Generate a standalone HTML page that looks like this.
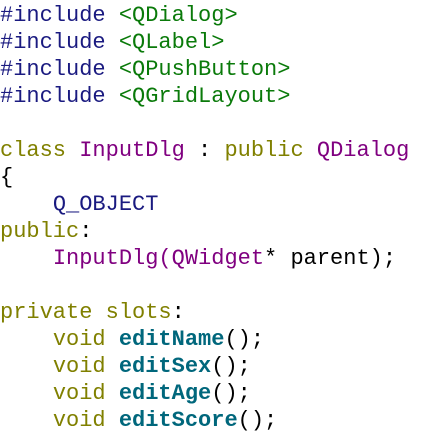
<!DOCTYPE html>
<html><head><meta charset="utf-8"><style>
html,body{margin:0;padding:0;background:#fff;width:422px;height:433px;overflow:hidden}
pre{margin:0;padding:0;position:absolute;top:2px;left:0;font-family:"Liberation Mono",monospace;font-size:22px;line-height:27px;color:#000}
.n{color:#1a1a80}.g{color:#0a7a0a}.k{color:#808000}.p{color:#800080}.b{color:#00677c;font-weight:bold}
</style></head><body>
<pre><span class="n">#include</span> <span class="g">&lt;QDialog&gt;</span>
<span class="n">#include</span> <span class="g">&lt;QLabel&gt;</span>
<span class="n">#include</span> <span class="g">&lt;QPushButton&gt;</span>
<span class="n">#include</span> <span class="g">&lt;QGridLayout&gt;</span>

<span class="k">class</span> <span class="p">InputDlg</span> : <span class="k">public</span> <span class="p">QDialog</span>
{
    <span class="n">Q_OBJECT</span>
<span class="k">public</span>:
    <span class="p">InputDlg(QWidget</span>* parent);

<span class="k">private slots</span>:
    <span class="k">void</span> <span class="b">editName</span>();
    <span class="k">void</span> <span class="b">editSex</span>();
    <span class="k">void</span> <span class="b">editAge</span>();
    <span class="k">void</span> <span class="b">editScore</span>();
</pre>
</body></html>
